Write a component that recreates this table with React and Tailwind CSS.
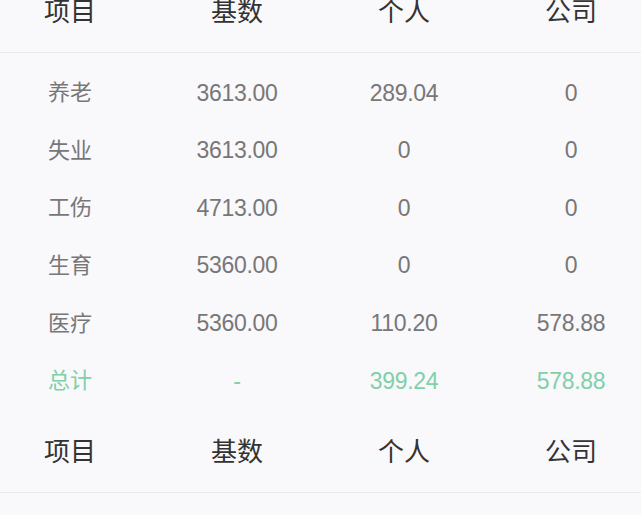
const rows = [
  ['养老', '3613.00', '289.04', '0'],
  ['失业', '3613.00', '0', '0'],
  ['工伤', '4713.00', '0', '0'],
  ['生育', '5360.00', '0', '0'],
  ['医疗', '5360.00', '110.20', '578.88'],
];
const total = ['总计', '-', '399.24', '578.88'];
const head = ['项目', '基数', '个人', '公司'];

function HeaderRow({ className = '' }) {
  return (
    <div className={`grid grid-cols-[repeat(4,140px)] gap-x-[27px] h-[80px] items-center border-b border-[#ebe8ee] text-[26px] text-[#333] ${className}`}>
      {head.map(h => (
        <div key={h} className="text-center">{h}</div>
      ))}
    </div>
  );
}

function DataRow({ cells, green }) {
  return (
    <div className={`grid grid-cols-[repeat(4,140px)] gap-x-[27px] h-[57.6px] items-center ${green ? 'text-[#80d0a8]' : 'text-[#777]'}`}>
      {cells.map((c, i) => (
        <div key={i} className={`text-center ${i === 0 ? 'text-[22px]' : 'text-[23px] tracking-[-0.3px]'}`}>{c}</div>
      ))}
    </div>
  );
}

export default function App() {
  return (
    <div
      className="w-[641px] h-[515px] overflow-hidden bg-[#f9f8fb]"
      style={{ fontFamily: '"Liberation Sans", "Noto Sans CJK SC", sans-serif' }}
    >
      <HeaderRow className="mt-[-27px]" />
      <div className="pt-[11px] pb-[3px]">
        {rows.map(r => (
          <DataRow key={r[0]} cells={r} />
        ))}
        <DataRow cells={total} green />
      </div>
      <HeaderRow />
    </div>
  );
}
